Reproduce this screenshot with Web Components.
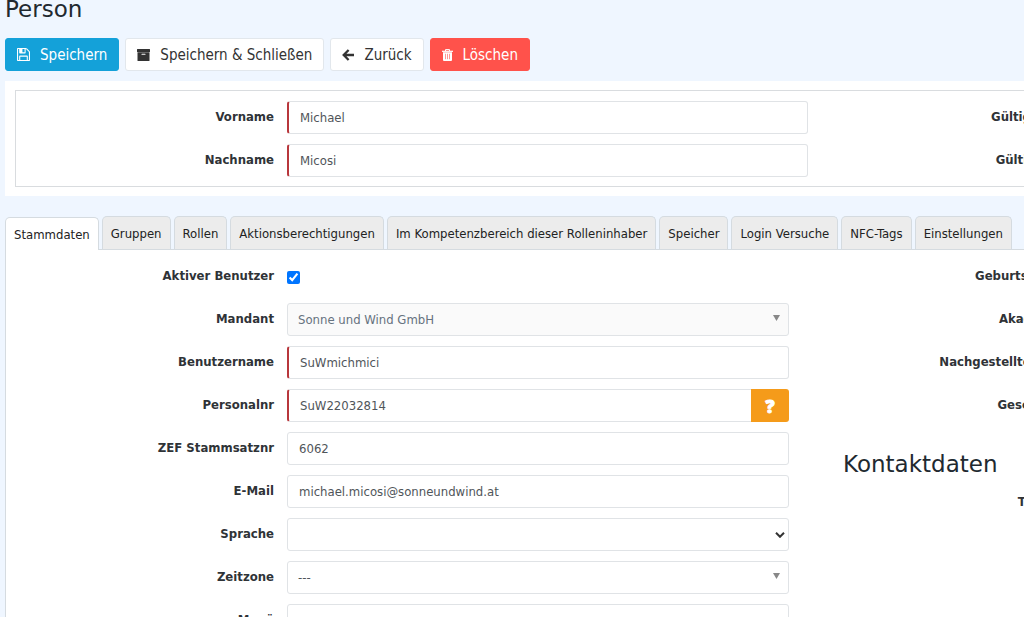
<!DOCTYPE html>
<html lang="de">
<head>
<meta charset="utf-8">
<meta name="viewport" content="width=device-width, initial-scale=1">
<title>Person</title>
<style>
    html {
        overflow-x: hidden;
    }
    body {
        margin: 0;
        padding-left: 5px;
        background: #eff6ff;
        color: #333;
        font: 13px/20px "DejaVu Sans Condensed", "DejaVu Sans", sans-serif;
    }
</style>
</head>
<body>
<person-page></person-page>

<script>
const ICONS = {
    save: `<svg width="13" height="13" viewBox="128 128 1536 1536" fill="currentColor" aria-hidden="true"><path d="M512 1536h768v-384h-768v384zm896 0h128v-896q0-14-10-38.500t-20-34.500l-281-281q-10-10-34-20t-39-10v416q0 40-28 68t-68 28h-576q-40 0-68-28t-28-68v-416h-128v1280h128v-416q0-40 28-68t68-28h832q40 0 68 28t28 68v416zm-384-928v-320q0-13-9.500-22.500t-22.500-9.500h-192q-13 0-22.500 9.500t-9.500 22.500v320q0 13 9.500 22.500t22.500 9.500h192q13 0 22.500-9.500t9.500-22.500zm640 32v928q0 40-28 68t-68 28h-1344q-40 0-68-28t-28-68v-1344q0-40 28-68t68-28h928q40 0 88 20t76 48l280 280q28 28 48 76t20 88z"/></svg>`,
    archive: `<svg width="13" height="12" viewBox="0 0 13 12" fill="currentColor" aria-hidden="true"><path fill-rule="evenodd" d="M.5 0h12a.5.5 0 0 1 .5.5v2a.5.5 0 0 1-.5.500H.5A.5.5 0 0 1 0 2.500v-2A.5.5 0 0 1 .5 0zM.5 3.300h12v8.200a.5.5 0 0 1-.5.500H1a.5.5 0 0 1-.5-.500zM5 4.700a.5.5 0 0 0 0 1.100h3a.5.5 0 0 0 0-1.100z"/></svg>`,
    back: `<svg width="12" height="12" viewBox="0 0 12 12" fill="none" stroke="currentColor" stroke-width="2.300" aria-hidden="true"><path d="M6.600 1 1.700 6l4.900 5M2 6h10"/></svg>`,
    trash: `<svg width="11" height="12" viewBox="0 0 11 12" fill="currentColor" aria-hidden="true"><path d="M1 3.200h9V11a1 1 0 0 1-1 1H2a1 1 0 0 1-1-1z"/><path d="M0 1.700h11v1.200H0z"/><path d="M3.500 2V.6h4V2" fill="none" stroke="currentColor"/><path d="M3.500 4.800v5.400M5.500 4.800v5.400M7.500 4.800v5.400" stroke="#ff524b" stroke-width=".6"/></svg>`,
    caret: `<svg width="7" height="6" viewBox="0 0 7 6" fill="#888" aria-hidden="true"><path d="M0 0h7L3.500 6z"/></svg>`,
    chevron: `<svg width="10" height="6" viewBox="0 0 10 6" fill="none" stroke="#333" stroke-width="2" aria-hidden="true"><path d="M1 .8l4 4 4-4"/></svg>`
};

class ActionButton extends HTMLElement {
    connectedCallback() {
        this.attachShadow({ mode: 'open' });
        this.shadowRoot.innerHTML = `
            <style>
                :host {
                    display: block;
                }
                button {
                    display: flex;
                    align-items: center;
                    gap: 10px;
                    height: 33px;
                    padding: 0 11px;
                    border: 1px solid #e2e7ec;
                    border-radius: 3px;
                    background: #fff;
                    color: #333;
                    font: inherit;
                    font-size: 15px;
                    cursor: pointer;
                }
                :host([kind="primary"]) button {
                    background: #14a1d9;
                    border-color: #14a1d9;
                    color: #fff;
                }
                :host([kind="danger"]) button {
                    background: #ff524b;
                    border-color: #ff524b;
                    color: #fff;
                }
            </style>
            <button type="button">${ICONS[this.getAttribute('icon')]}<slot></slot></button>
        `;
    }
}
customElements.define('action-button', ActionButton);

class TabStrip extends HTMLElement {
    connectedCallback() {
        const tabs = this.getAttribute('tabs').split('|');
        this.attachShadow({ mode: 'open' });
        this.shadowRoot.innerHTML = `
            <style>
                :host {
                    display: block;
                }
                div {
                    display: flex;
                    align-items: flex-end;
                    gap: 3px;
                }
                button {
                    height: 33px;
                    padding: 2px 8px 0;
                    border: 1px solid #d5dbe0;
                    border-bottom: 0;
                    border-radius: 5px 5px 0 0;
                    background: #ececec;
                    color: #222;
                    font: inherit;
                    white-space: nowrap;
                    cursor: pointer;
                }
                button[aria-selected="true"] {
                    z-index: 1;
                    margin-bottom: -1px;
                    background: #fff;
                }
            </style>
            <div role="tablist">
                ${tabs.map((tab, i) => `<button type="button" role="tab" aria-selected="${i === 0}">${tab}</button>`).join('')}
            </div>
        `;
    }
}
customElements.define('tab-strip', TabStrip);

class FormField extends HTMLElement {
    control() {
        const type = this.getAttribute('type') || 'text';
        const value = this.getAttribute('value') || '';
        if (type === 'checkbox') {
            return '<input id="control" type="checkbox" checked>';
        }
        if (type === 'select' || type === 'picker') {
            const disabled = this.hasAttribute('disabled') ? 'disabled' : '';
            return `
                <span class="pick ${type}">
                    <select id="control" ${disabled}><option>${value}</option></select>
                    ${type === 'select' ? ICONS.chevron : ICONS.caret}
                </span>`;
        }
        const help = this.hasAttribute('help') ? '<button type="button" aria-label="Hilfe">?</button>' : '';
        return `<input id="control" type="text" value="${value}">${help}`;
    }

    connectedCallback() {
        this.attachShadow({ mode: 'open' });
        this.shadowRoot.innerHTML = `
            <style>
                :host {
                    display: flex;
                    gap: 13px;
                    height: 33px;
                }
                label {
                    flex: 0 0 var(--label-width, 227px);
                    line-height: 32px;
                    font-weight: bold;
                    text-align: right;
                    white-space: nowrap;
                    color: #2f3337;
                }
                .control {
                    flex: 1;
                    display: flex;
                    min-width: 0;
                }
                input[type="text"],
                select {
                    box-sizing: border-box;
                    flex: 1;
                    min-width: 0;
                    height: 33px;
                    margin: 0;
                    padding: 0 11px;
                    border: 1px solid #e0e3e6;
                    border-radius: 3px;
                    outline: 0;
                    background: #fff;
                    color: #50555a;
                    font: inherit;
                }
                :host([required]) input {
                    border-left: 2px solid #b8373c;
                }
                input[type="checkbox"] {
                    align-self: center;
                    width: 13px;
                    height: 13px;
                    margin: 2px 0 0;
                    accent-color: #0075ff;
                }
                .pick {
                    flex: 1;
                    display: grid;
                    align-items: center;
                }
                .pick > * {
                    grid-area: 1 / 1;
                }
                select {
                    appearance: none;
                    padding: 0 10px;
                }
                select:disabled {
                    background: #fafafa;
                    color: #66727f;
                    opacity: 1;
                }
                .pick svg {
                    justify-self: end;
                    margin-right: 4px;
                    pointer-events: none;
                }
                .picker svg {
                    margin: 0 9px 3px 0;
                }
                :host([help]) input {
                    border-right: 0;
                    border-radius: 3px 0 0 3px;
                }
                button {
                    flex: 0 0 38px;
                    padding: 0;
                    border: 0;
                    border-radius: 0 3px 3px 0;
                    background: #f59b1a;
                    color: #fff;
                    font: 800 18px "Open Sans", sans-serif;
                    -webkit-text-stroke: 1px #fff;
                    cursor: pointer;
                }
            </style>
            <label for="control">${this.getAttribute('label')}</label>
            <div class="control">${this.control()}</div>
        `;
    }
}
customElements.define('form-field', FormField);

class FieldColumn extends HTMLElement {
    connectedCallback() {
        this.attachShadow({ mode: 'open' });
        this.shadowRoot.innerHTML = `
            <style>
                :host {
                    flex: 1 1 0;
                    display: flex;
                    flex-direction: column;
                    gap: 10px;
                    min-width: 0;
                }
            </style>
            <slot></slot>
        `;
    }
}
customElements.define('field-column', FieldColumn);

class PersonPage extends HTMLElement {
    connectedCallback() {
        this.attachShadow({ mode: 'open' });
        this.shadowRoot.innerHTML = `
            <style>
                :host {
                    display: block;
                }
                h1, h2 {
                    margin: 0;
                    color: #212930;
                    font: 23px/24px "DejaVu Sans", sans-serif;
                }
                h1 {
                    line-height: 18px;
                }
                h2 {
                    padding-top: 20px;
                }
                .actions {
                    display: flex;
                    gap: 6px;
                    margin: 20px 0 10px;
                }
                /* the form is wider than the window and runs out on the right */
                main {
                    width: calc(100% + 587px);
                }
                .head {
                    margin-bottom: 20px;
                    padding: 9px 10px;
                    background: #fff;
                }
                .names {
                    --label-width: 251px;
                    display: flex;
                    padding: 10px 7px 9px;
                    border: 1px solid #d9dcdf;
                }
                .data {
                    display: flex;
                    gap: 54px;
                    padding: 10px 25px 40px 41px;
                    border: 1px solid #d5dbe0;
                    background: #fff;
                }
            </style>
            <h1>Person</h1>
            <div class="actions">
                <action-button kind="primary" icon="save">Speichern</action-button>
                <action-button icon="archive">Speichern &amp; Schließen</action-button>
                <action-button icon="back">Zurück</action-button>
                <action-button kind="danger" icon="trash">Löschen</action-button>
            </div>
            <main>
                <section class="head">
                    <div class="names">
                        <field-column>
                            <form-field label="Vorname" value="Michael" required></form-field>
                            <form-field label="Nachname" value="Micosi" required></form-field>
                        </field-column>
                        <field-column>
                            <form-field label="Gültig von"></form-field>
                            <form-field label="Gültig bis"></form-field>
                        </field-column>
                    </div>
                </section>
                <tab-strip tabs="Stammdaten|Gruppen|Rollen|Aktionsberechtigungen|Im Kompetenzbereich dieser Rolleninhaber|Speicher|Login Versuche|NFC-Tags|Einstellungen"></tab-strip>
                <section class="data">
                    <field-column>
                        <form-field label="Aktiver Benutzer" type="checkbox"></form-field>
                        <form-field label="Mandant" type="picker" value="Sonne und Wind GmbH" disabled></form-field>
                        <form-field label="Benutzername" value="SuWmichmici" required></form-field>
                        <form-field label="Personalnr" value="SuW22032814" required help></form-field>
                        <form-field label="ZEF Stammsatznr" value="6062"></form-field>
                        <form-field label="E-Mail" value="michael.micosi@sonneundwind.at"></form-field>
                        <form-field label="Sprache" type="select"></form-field>
                        <form-field label="Zeitzone" type="picker" value="---"></form-field>
                        <form-field label="Menü" type="select"></form-field>
                    </field-column>
                    <field-column>
                        <form-field label="Geburtsdatum"></form-field>
                        <form-field label="Akad. Titel"></form-field>
                        <form-field label="Nachgestellter Titel"></form-field>
                        <form-field label="Geschlecht"></form-field>
                        <h2>Kontaktdaten</h2>
                        <form-field label="Telefon:"></form-field>
                    </field-column>
                </section>
            </main>
        `;
    }
}
customElements.define('person-page', PersonPage);
</script>
</body>
</html>
